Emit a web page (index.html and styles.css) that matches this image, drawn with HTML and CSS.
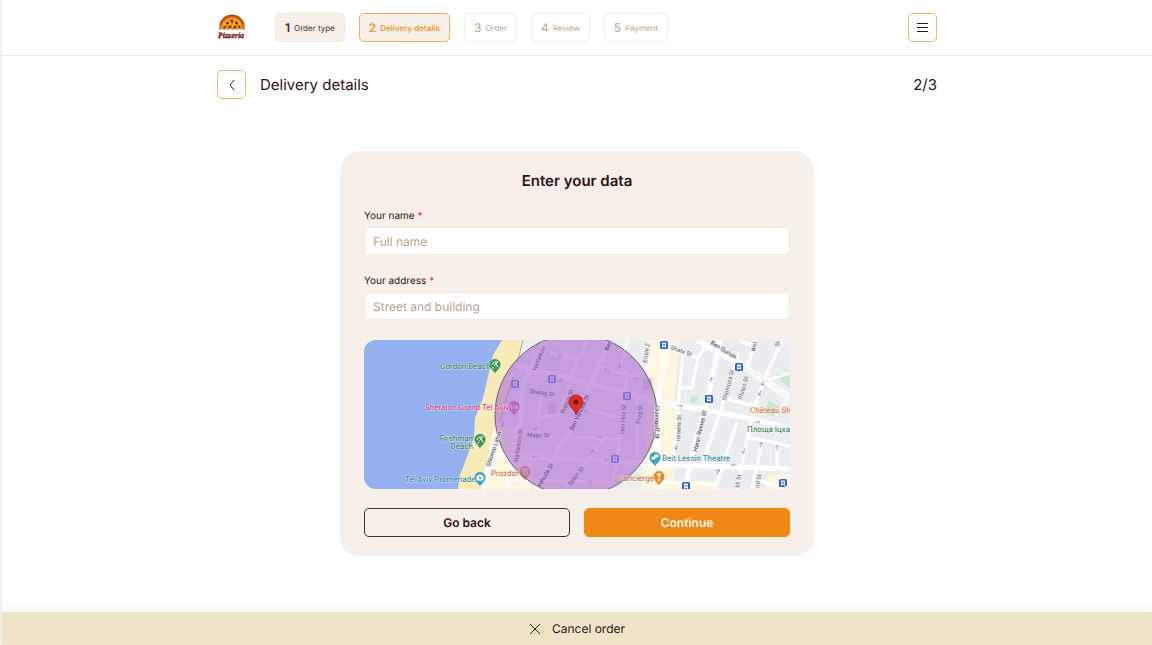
FILE: index.html
```html
<!DOCTYPE html>
<html lang="en">
<head>
<meta charset="utf-8">
<meta name="viewport" content="width=device-width, initial-scale=1">
<title>Pizzeria – Delivery details</title>
<link rel="stylesheet" href="styles.css">
</head>
<body>
<div class="page">
  <header class="header">
    <div class="container header-row">
      <a class="logo" href="#" aria-label="Pizzeria">
        <svg width="28" height="28" viewBox="-1 1 28 28">
          <path d="M1 16C1 8 6 2 14 2s13 6 13 14z" fill="#f08a24"/>
          <path d="M1.500 13C3 6 8 2 14 2s11 4 12.500 11l-2 .5C23 7.500 19 4.500 14 4.500S5 7.500 3.500 13.500z" fill="#c85a17"/>
          <path d="M2 11C4 5 8 2 14 2s10 3 12 9" fill="none" stroke="#7b2a12" stroke-width=".7"/>
          <path d="M4 16C4 10 8 5.500 14 5.500S24 10 24 16z" fill="#f8b51f"/>
          <g fill="#8c1d12"><circle cx="14" cy="8" r="1.400"/><circle cx="9.500" cy="10" r="1.500"/><circle cx="18.500" cy="10" r="1.500"/><circle cx="6.500" cy="14" r="1.300"/><circle cx="12" cy="13.500" r="1.500"/><circle cx="17" cy="14" r="1.400"/><circle cx="21.500" cy="13.800" r="1.300"/></g>
          <g stroke="#4a2a10" stroke-width=".7"><path d="M11 7l1.500 1M16 7.500l1 1M13 11l2-.5M8 12.500l1.500 1M20 12l-1 1M14.500 15.500l1-1M9 15.500l1-.5"/></g>
          <path d="M1 16h26" stroke="#b5481a" stroke-width=".7"/>
          <text class="logo-text" x="13" y="25" text-anchor="middle">Pizzeria</text>
        </svg>
      </a>
      <nav class="steps" aria-label="Order steps">
        <a class="step done" href="#"><span class="num">1</span>Order type</a>
        <a class="step active" href="#" aria-current="step"><span class="num">2</span>Delivery details</a>
        <a class="step" href="#"><span class="num">3</span>Order</a>
        <a class="step" href="#"><span class="num">4</span>Review</a>
        <a class="step" href="#"><span class="num">5</span>Payment</a>
      </nav>
      <button class="icon-button" type="button" aria-label="Menu">
        <svg width="13" height="11" viewBox="0 0 13 11" stroke="#301a1c" stroke-width="1"><path d="M1 1.500h11M1 5.500h11M1 9.500h11"/></svg>
      </button>
    </div>
  </header>

  <main class="main">
    <div class="container title-row">
      <button class="icon-button" type="button" aria-label="Back">
        <svg width="8" height="12" viewBox="0 0 8 12" fill="none" stroke="#301a1c" stroke-width="1"><path d="M6 1L2 6l4 5"/></svg>
      </button>
      <h1 class="title">Delivery details</h1>
      <span class="title">2/3</span>
    </div>

    <form class="card">
      <h2 class="card-title">Enter your data</h2>
      <div class="field">
        <label for="name">Your name <span class="required">*</span></label>
        <input id="name" type="text" placeholder="Full name">
      </div>
      <div class="field">
        <label for="address">Your address <span class="required">*</span></label>
        <input id="address" type="text" placeholder="Street and building">
      </div>

      <svg class="map" viewBox="0 0 426 149" preserveAspectRatio="xMidYMid slice" role="img" aria-label="Delivery area map">
        <defs>
          <g id="bus"><rect x="-4" y="-4" width="8" height="8" rx="1.500" fill="#2962d9"/><rect x="-2" y="-2.500" width="4" height="4.500" rx=".7" fill="#fff"/><path d="M-1.300 -.2h2.600" stroke="#2962d9" stroke-width="1.200"/><path d="M-1.500 2v1M1.500 2v1" stroke="#fff" stroke-width=".8"/></g>
          <path id="marker" d="M0 9C-.8 5.500-5.700 4-5.700-.5a5.700 5.700 0 0 1 11.400 0C5.700 4 .8 5.500 0 9z"/>
          <path id="arrow" d="M-2.500 0h5M.8-1.500L2.500 0 .8 1.500" fill="none" stroke="#8d94bd" stroke-width=".8"/>
        </defs>
        <rect width="426" height="149" fill="#ebedf0"/>
        <!-- commercial blocks -->
        <g fill="#fef6de">
          <path d="M284 0h32l-6 62 4 0-4 68v19h-34l6-40z"/>
          <path d="M124 112h50l-8 37h-50zM130 85l22 4-4 30h-24z"/>
          <path d="M405 134h21v15h-25zM310 141h44v8h-44z"/>
        </g>
        <!-- parks -->
        <g fill="#cde8d2">
          <path d="M328 55l6 1-1 7-7-1zM404 60l15 8-5 9-12-3zM411 35l15-4v18zM183 13l14-4v10l-12 4z"/>
          <path d="M184 63h8v11h-8zM279 38h9v12h-9z" fill="#c9cfd2"/>
        </g>
        <!-- sand and sea -->
        <path d="M0 0h159l-8 32-10 30-10 30-7 30-7 27H0z" fill="#f9eab9"/>
        <path d="M0 0h138l-9 15-4 17-6 26-8 20-1 20-9 24-6 16-1 11H0z" fill="#93b1f1"/>
        <path d="M159 0l-8 32-8 25-8 28" fill="none" stroke="#64a872" stroke-width=".7"/>
        <g fill="none" stroke="#fff" stroke-linejoin="round">
          <g stroke-width="5">
            <path d="M246 0l-20 45-18 43-19 30-18 31"/>
            <path d="M303 0l-9 62-1 43 4 44"/>
            <path d="M333 0l43 24 50 34" stroke-width="6"/>
            <path d="M151 25l7 2 100 25 35 9 90 17 43 10"/>
            <path d="M126 115l100 5 67 4 133 5"/>
            <path d="M181 0l-22 45-3 37-7 36-6 31"/>
            <path d="M356 0l-12 58-15 54-8 37"/>
            <path d="M134 82l-9 40-5 27"/>
          </g>
          <g stroke-width="3">
            <path d="M163 96l93 3M263 35l-7 63-8 51M274 58l-1 60M241 97l-40 52"/>
            <path d="M186 13l28 7M223 0l-17 38M236 27l37 11 12-12M264 0l-8 27 8 8"/>
            <path d="M178 50l-6 42M173 77l21-2 12-30M223 70l31 7M146 140l100 2M158 27l-14 12"/>
            <path d="M319 15l-5 50-5 60M283 20l14 2M301 8l33 10 10-16M334 18l-6 30-14-1"/>
            <path d="M374 15l-13 43-23 67M373 82l-22 67M391 0l-7 25M418 0l-17 38-12 34-15 70-1 7"/>
            <path d="M359 58l34 9M383 97l43 9M398 103l-10 46M413 105v23M401 41l25-8M412 76l14-20M299 142l55 2M395 140l24 9M378 128l-5 21M375 0l12 5"/>
          </g>
        </g>
        <path d="M376 25l24 14 26 20" fill="none" stroke="#a5d3ac" stroke-width=".7" stroke-dasharray="2 1"/>
        <g>
          <use href="#arrow" transform="translate(197 16) rotate(190)"/><use href="#arrow" transform="translate(243 30) rotate(190)"/><use href="#arrow" transform="translate(271 38)"/><use href="#arrow" transform="translate(256 25) rotate(110)"/><use href="#arrow" transform="translate(196 40)"/><use href="#arrow" transform="translate(223 71) rotate(190)"/><use href="#arrow" transform="translate(236 97)"/><use href="#arrow" transform="translate(172 88) rotate(100)"/><use href="#arrow" transform="translate(171 117) rotate(180)"/><use href="#arrow" transform="translate(243 120) rotate(180)"/><use href="#arrow" transform="translate(228 112) rotate(300)"/><use href="#arrow" transform="translate(226 142)"/><use href="#arrow" transform="translate(139 84) rotate(100)"/>
          <use href="#arrow" transform="translate(316 66)"/><use href="#arrow" transform="translate(347 40) rotate(285)"/><use href="#arrow" transform="translate(399 43) rotate(110)"/><use href="#arrow" transform="translate(396 53) rotate(110)"/><use href="#arrow" transform="translate(393 82)"/><use href="#arrow" transform="translate(370 125) rotate(180)"/><use href="#arrow" transform="translate(354 132) rotate(285)"/><use href="#arrow" transform="translate(312 107) rotate(100)"/><use href="#arrow" transform="translate(380 111) rotate(105)"/><use href="#arrow" transform="translate(397 105) rotate(280)"/><use href="#arrow" transform="translate(413 108) rotate(270)"/>
        </g>
        <g stroke="#fff" stroke-width=".3">
          <use href="#marker" x="150" y="67" fill="#df4286"/>
          <use href="#marker" x="161" y="132" fill="#dd7c2b"/>
        </g>
        <path d="M147 64v5M147 68h6v-2h-4M153 66v3" fill="none" stroke="#fff"/>
        <path d="M159 128v3q1 1 1 4M161 128v3h-2M163 128v7" fill="none" stroke="#fff" stroke-width=".9"/>
        <use href="#bus" x="151" y="44"/><use href="#bus" x="188" y="39"/><use href="#bus" x="263" y="56"/><use href="#bus" x="251" y="119"/>
        <circle cx="212" cy="75" r="81" fill="#b277d4" fill-opacity=".68" stroke="#6d6070" stroke-width="1"/>
        <g class="street shaded">
          <text transform="translate(172 31) rotate(-68)">HaYarkon</text>
          <text transform="translate(165 53) rotate(8)">Shalag St</text>
          <text transform="translate(200 74) rotate(-68)">Ruppin St</text>
          <text class="dark" transform="translate(209 91) rotate(-65)">Ben Yehuda St</text>
          <text class="dark" transform="translate(244 11) rotate(-68)">Ben</text>
          <text transform="translate(163 97) rotate(1)">Mapu St</text>
          <text transform="translate(154 122) rotate(-82)">HaYarkon St</text>
          <text class="dark" transform="translate(176 148) rotate(-60)">Yehuda St</text>
          <text transform="translate(207 146) rotate(-53)">Sirkin St</text>
          <text transform="translate(260 94) rotate(-86)">Dov Hoz St</text>
          <text transform="translate(276 84) rotate(-82)">Frug St</text>
        </g>
        <g class="street">
          <text class="dark" transform="translate(126 127) rotate(-72)">Shlomo Lahat</text>
          <text transform="translate(283 23) rotate(-82)">Emile Z</text>
          <text transform="translate(306 9) rotate(20)">Shats St</text>
          <text class="dark" transform="translate(291 66) rotate(90)">Dizengoff St</text>
          <text transform="translate(316 101) rotate(-87)">Israelis St</text>
          <text class="dark" transform="translate(333 112) rotate(-77)">Harav Reines St</text>
          <text class="dark" transform="translate(346 4) rotate(31)">Ben Gurion</text>
          <text transform="translate(362 61) rotate(-75)">Shpinoza St</text>
          <text transform="translate(378 60) rotate(-74)">Philon St</text>
          <text transform="translate(391 12) rotate(-78)">Wei</text>
          <text transform="translate(415 7) rotate(-78)">St</text>
          <text transform="translate(375 148) rotate(-80)">kh St</text>
          <text transform="translate(395 148) rotate(-80)">nd St</text>
        </g>
        <g class="place">
          <text x="61" y="70" fill="#d0307f" stroke="none">Sheraton Grand Tel Aviv</text>
          <text x="127" y="136" fill="#c0632f">Prozdor</text>
          <text x="76" y="29" fill="#2e7d46">Gordon Beach</text>
          <text x="109" y="101" fill="#2e7d46" text-anchor="end">Frishman</text>
          <text x="109" y="109" fill="#2e7d46" text-anchor="end">Beach</text>
          <text x="41" y="142" fill="#267f98">Tel Aviv Promenade</text>
          <text x="254" y="141" fill="#cf6b1d">Concierge</text>
          <text x="298" y="121" fill="#267f98">Beit Lessin Theatre</text>
          <text x="386" y="73" fill="#cf6b1d">Château Sh</text>
          <text x="383" y="92" fill="#2e7d46">Площа Іцха</text>
        </g>
        <use href="#bus" x="300" y="5"/><use href="#bus" x="375" y="27"/><use href="#bus" x="345" y="59"/><use href="#bus" x="322" y="146"/><use href="#bus" x="419" y="143"/>
        <g stroke="#fff" stroke-width=".3">
          <use href="#marker" x="131" y="25" fill="#3c9850"/>
          <use href="#marker" x="116" y="100" fill="#3c9850"/>
          <use href="#marker" x="116" y="138" fill="#3da4bd"/>
          <use href="#marker" x="291" y="118" fill="#3da4bd"/>
          <use href="#marker" x="295" y="137" fill="#e28c27"/>
        </g>
        <g fill="none" stroke="#fff" stroke-width="1">
          <path d="M128 25q1-4 6-3l-4 4M131 23l3 4M128 28h2"/>
          <path d="M113 100q1-4 6-3l-4 4M116 98l3 4M113 103h2"/>
          <path d="M113 136h1.500l.5-1h2l.5 1h1.500v4h-6z" fill="#fff"/><circle cx="116" cy="138" r="1" stroke="#3da4bd"/>
          <path d="M288 117h3v2h-3zM291 115h3v2h-3z" fill="#fff"/>
          <path d="M293 134h4l-2 2.500zM295 136v4M293.500 140h3"/>
        </g>
        <path d="M212 75c-1-6-7-7-7-13a7 7 0 0 1 14 0c0 6-6 7-7 13z" fill="#d93025" stroke="#b31412" stroke-width=".8"/>
        <circle cx="212" cy="62" r="2.500" fill="#751411"/>
      </svg>

      <div class="actions">
        <button class="button outline" type="button">Go back</button>
        <button class="button primary" type="submit">Continue</button>
      </div>
    </form>
  </main>

  <button class="cancel" type="button">
    <svg width="12" height="12" viewBox="0 0 12 12" stroke="#301a1c" stroke-width="1"><path d="M1 1l10 10M11 1L1 11"/></svg>
    Cancel order
  </button>
</div>
</body>
</html>
```
FILE: styles.css
```css
* { box-sizing: border-box; }

body {
  margin: 0;
  font-family: Inter, "Liberation Sans", sans-serif;
  color: #301214;
  background: #fff;
  text-rendering: geometricPrecision;
}

button, input { font: inherit; color: inherit; text-rendering: inherit; }
button { cursor: pointer; }
h1, h2 { margin: 0; }

.page {
  min-height: 100vh;
  display: flex;
  flex-direction: column;
  border-left: 2px solid #f3f3f3;
}

.container {
  width: 100%;
  max-width: 720px;
  margin: 0 auto;
  display: flex;
  align-items: center;
}

.header { border-bottom: 1px solid #efebdf; }
.header-row { min-height: 55px; }
.logo { display: flex; margin-right: 30px; }
.logo-text {
  font: italic bold 8px "Liberation Serif", serif;
  fill: #6d1518;
  stroke: #6d1518;
  stroke-width: .3px;
}

.steps { display: flex; gap: 14px; flex: 1; }
.step {
  display: flex;
  align-items: center;
  gap: 4px;
  height: 29px;
  padding: 0 9px;
  border: 1px solid #f7eedc;
  border-radius: 5px;
  font-size: 8px;
  color: #b9a592;
  text-decoration: none;
}
.num { font-size: 12px; }
.done { background: #f7efe9; border-color: #f1e8d6; color: #4a2e2f; }
.done .num { font-weight: 600; }
.active {
  background: #f7efe9;
  border-color: #f3ae58;
  color: #f0962f;
  font-weight: 600;
}

.icon-button {
  display: flex;
  align-items: center;
  justify-content: center;
  width: 29px;
  height: 29px;
  padding: 0;
  background: #fff;
  border: 1px solid #f3b667;
  border-radius: 5px;
}

.main { flex: 1; }
.title-row { padding-top: 14px; gap: 14px; }
.title { font-size: 15px; font-weight: 400; line-height: 20px; }
h1.title { flex: 1; }

.card {
  width: 100%;
  max-width: 474px;
  margin: 52px auto;
  padding: 20px 24px 19px;
  background: #f7efe9;
  border-radius: 20px;
}
.card-title {
  margin-bottom: 18px;
  font-size: 15px;
  font-weight: 600;
  line-height: 20px;
  text-align: center;
}

.field { margin-bottom: 19px; }
.field label {
  display: block;
  margin-bottom: 4px;
  font-size: 10px;
  line-height: 14px;
}
.required { color: #f02424; }
.field input {
  display: block;
  width: 100%;
  height: 28px;
  padding: 0 8px;
  font-size: 12px;
  background: #fff;
  border: 1px solid #f3ead8;
  border-radius: 4px;
}
.field input::placeholder { color: #b5a38c; opacity: 1; }

.map {
  display: block;
  width: 100%;
  margin-top: 20px;
  border-radius: 12px;
}
.street text {
  font: 6px Roboto, sans-serif;
  fill: #5a6067;
  stroke: #f4f5f7;
  stroke-width: 1px;
  paint-order: stroke;
}
.street .dark { fill: #33373c; }
.shaded text { fill: #705580; stroke: #c8a2df; }
.shaded .dark { fill: #5d466b; }
.place text {
  font: 8px Roboto, sans-serif;
  stroke: #fff;
  stroke-opacity: .6;
  stroke-width: 1px;
  paint-order: stroke;
}

.actions {
  display: grid;
  grid-template-columns: 1fr 1fr;
  gap: 14px;
  margin-top: 19px;
}
.button {
  height: 29px;
  padding: 0;
  border-radius: 5px;
  font-size: 12px;
  font-weight: 600;
}
.outline { background: transparent; border: 1px solid #4a2e2f; }
.primary { background: #ef8815; border: 1px solid #ef8815; color: #fff4e4; }

.cancel {
  display: flex;
  align-items: center;
  justify-content: center;
  gap: 11px;
  height: 33px;
  padding: 0;
  border: 0;
  background: #eee5c8;
  box-shadow: 0 -2px 8px rgba(0, 0, 0, .06);
  font-size: 12px;
}
```
